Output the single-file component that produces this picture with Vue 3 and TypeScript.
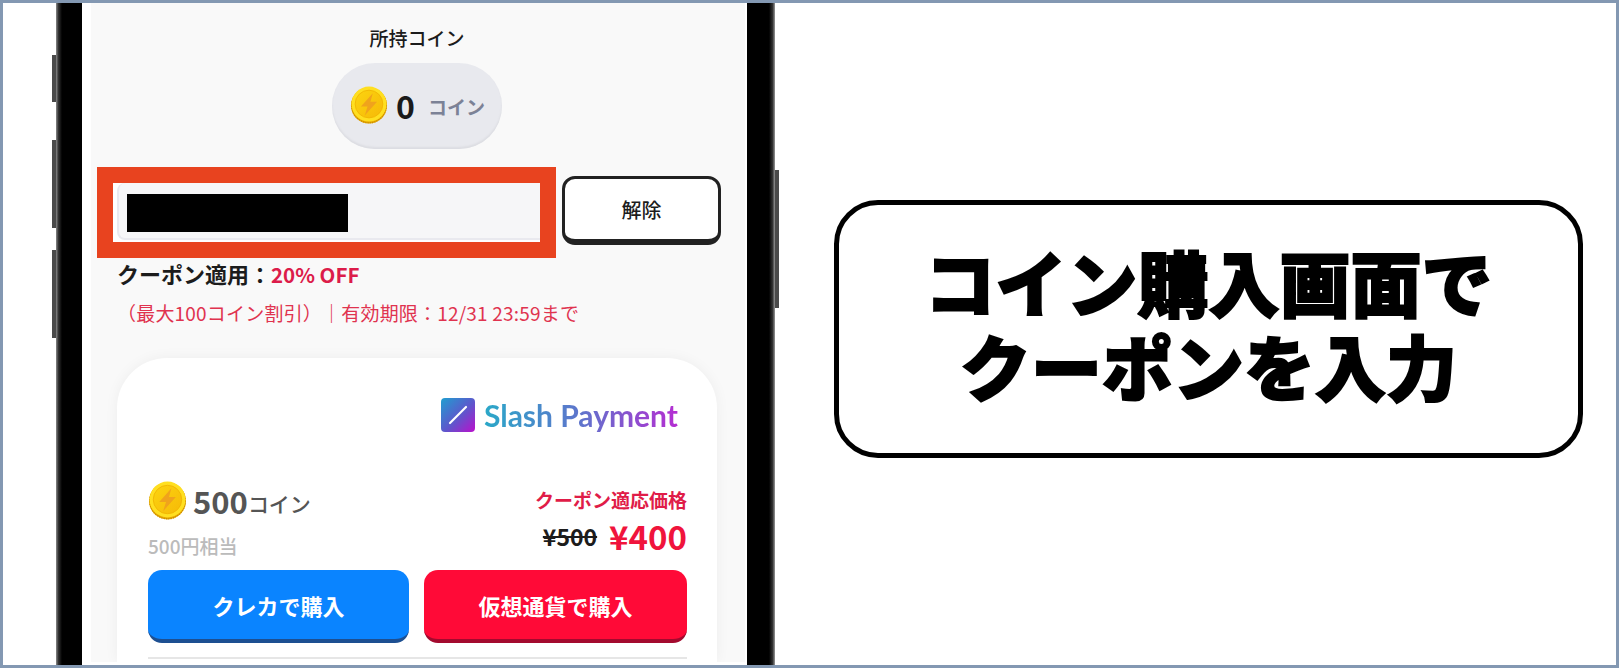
<script setup lang="ts">
const buyButtons = [
  { label: 'クレカで購入', kind: 'credit' },
  { label: '仮想通貨で購入', kind: 'crypto' },
];
</script>

<template>
  <div class="page">
    <svg class="sprite" width="0" height="0" aria-hidden="true">
      <defs>
        <linearGradient id="coinFace" x1="0" y1="0" x2="1" y2="1">
          <stop offset="0" stop-color="#fcd40f" />
          <stop offset="1" stop-color="#f6b908" />
        </linearGradient>
        <linearGradient id="slashGrad" x1="0" y1="0" x2="1" y2="1">
          <stop offset="0" stop-color="#1f9fd0" />
          <stop offset="0.55" stop-color="#5f55cc" />
          <stop offset="1" stop-color="#bb10cc" />
        </linearGradient>
        <symbol id="coin" viewBox="0 0 40 40">
          <circle cx="20" cy="20.5" r="19" fill="#e9a800" />
          <circle cx="20" cy="20.5" r="18.2" fill="none" stroke="#c98f00" stroke-width="1.4" stroke-dasharray="1.2 1.2" />
          <circle cx="20" cy="19" r="18.4" fill="#ffdf20" />
          <circle cx="20" cy="19" r="14.6" fill="url(#coinFace)" stroke="#efb000" stroke-width="0.8" />
          <path d="M24 7.5 L11.5 21.5 H18.5 L15.5 31 L28.5 16.5 H21.5 Z" fill="#f0a31c" />
        </symbol>
      </defs>
    </svg>

    <div class="phone">
      <span class="side-btn left one"></span>
      <span class="side-btn left two"></span>
      <span class="side-btn left three"></span>
      <span class="side-btn right"></span>

      <div class="screen">
        <div class="balance-title">所持コイン</div>
        <div class="balance-pill">
          <svg class="coin-small"><use href="#coin" /></svg>
          <span class="balance-num">0</span>
          <span class="balance-unit">コイン</span>
        </div>

        <div class="coupon-row">
          <div class="highlight">
            <div class="code-input"><div class="redacted"></div></div>
          </div>
          <button class="remove-btn">解除</button>
        </div>

        <div class="applied">クーポン適用：<span class="off">20% OFF</span></div>
        <div class="limit">（最大100コイン割引）｜有効期限：12/31 23:59まで</div>

        <div class="card">
          <div class="logo">
            <svg class="logo-mark" viewBox="0 0 34 34">
              <rect width="34" height="34" rx="4" fill="url(#slashGrad)" />
              <path d="M9 25 L25 9" stroke="#fff" stroke-width="2.2" stroke-linecap="round" />
            </svg>
            <span class="logo-text">Slash Payment</span>
          </div>

          <div class="plan">
            <div>
              <div class="plan-coins">
                <svg class="coin-large"><use href="#coin" /></svg>
                <span class="plan-num">500</span><span class="plan-unit">コイン</span>
              </div>
              <div class="plan-yen">500円相当</div>
            </div>
            <div class="plan-price">
              <div class="price-label">クーポン適応価格</div>
              <div class="price-row">
                <s class="price-old">¥500</s>
                <span class="price-new">¥400</span>
              </div>
            </div>
          </div>

          <div class="buy-row">
            <button v-for="b in buyButtons" :key="b.kind" class="buy-btn" :class="b.kind">{{ b.label }}</button>
          </div>
          <div class="divider"></div>
        </div>
      </div>
    </div>

    <div class="callout">
      <div>コイン購入画面で</div>
      <div>クーポンを入力</div>
    </div>
  </div>
</template>

<style scoped>
.page {
  width: 1619px;
  height: 668px;
  box-sizing: border-box;
  border: 3px solid #8398b2;
  background: #fff;
  display: flex;
  overflow: hidden;
  font-family: "Noto Sans CJK JP", "Noto Sans", sans-serif;
  color: #1c1c1c;
}

.sprite {
  position: absolute;
}

.phone {
  position: relative;
  flex: none;
  width: 719px;
  height: 100%;
  box-sizing: border-box;
  margin-left: 53px;
  border-left: 26px solid #000;
  border-right: 28px solid #000;
  padding: 0 2px 3px 9px;
  background: #fff;
}

.phone::before,
.phone::after {
  content: "";
  position: absolute;
  top: 0;
  bottom: 0;
  width: 6px;
}
.phone::before {
  left: -26px;
  background: linear-gradient(to right, #8a8a8a, #333 40%, #000);
}
.phone::after {
  right: -28px;
  background: linear-gradient(to left, #999, #333 40%, #000);
}

.side-btn {
  position: absolute;
  width: 4px;
  background: #4a4a4a;
}
.side-btn.left {
  left: -30px;
}
.side-btn.one {
  top: 52px;
  height: 47px;
}
.side-btn.two {
  top: 137px;
  height: 88px;
}
.side-btn.three {
  top: 247px;
  height: 88px;
}
.side-btn.right {
  right: -32px;
  top: 167px;
  height: 138px;
}

.screen {
  height: 100%;
  background: #f9f9f9;
  display: flex;
  flex-direction: column;
  overflow: hidden;
  padding-top: 24px;
  box-sizing: border-box;
}

.balance-title {
  flex: none;
  text-align: center;
  font-size: 19px;
  line-height: 22px;
  font-weight: 500;
  margin-right: 2px;
}

.balance-pill {
  flex: none;
  align-self: center;
  margin: 14px 2px 0 0;
  width: 170px;
  height: 86px;
  box-sizing: border-box;
  padding: 0 0 3px 18px;
  border-radius: 43px;
  background: #e8e9ee;
  box-shadow: inset 0 -2px 2px #dcdde2;
  display: flex;
  align-items: center;
}

.coin-small {
  width: 38px;
  height: 38px;
}

.balance-num {
  margin-left: 8px;
  font-size: 32px;
  font-weight: 700;
  color: #1a1a1a;
}

.balance-unit {
  margin: 3px 0 0 13px;
  font-size: 19px;
  font-weight: 700;
  color: #7c8296;
}

.coupon-row {
  flex: none;
  display: flex;
  margin: 18px 0 0 6px;
}

.highlight {
  width: 459px;
  height: 91px;
  box-sizing: border-box;
  border: 16px solid #e8431f;
  background: #fff;
}

.code-input {
  margin-left: 4px;
  height: 57px;
  box-sizing: border-box;
  padding: 11px 0 0 10px;
  background: #f6f6f8;
  border-left: 2px solid #e9e9ef;
  border-bottom: 2px solid #e9e9ef;
  border-radius: 8px 0 0 8px;
}

.redacted {
  width: 221px;
  height: 38px;
  background: #000;
  margin-left: -2px;
}

.remove-btn {
  margin: 9px 0 0 6px;
  width: 159px;
  height: 69px;
  box-sizing: border-box;
  border: 3px solid #222;
  border-bottom-width: 6px;
  border-radius: 13px;
  background: #fff;
  font-family: inherit;
  font-size: 20px;
  font-weight: 500;
  color: #1c1c1c;
}

.applied {
  flex: none;
  margin: 2px 0 0 26px;
  font-size: 22px;
  line-height: 26px;
  font-weight: 700;
}

.off {
  font-size: 20.5px;
  color: #dc1c4a;
}

.limit {
  flex: none;
  margin: 14px 0 0 26px;
  font-size: 19px;
  line-height: 24px;
  letter-spacing: 0.2px;
  color: #e0334f;
  white-space: nowrap;
}

.card {
  flex: 1 0 auto;
  margin: 33px 28px 0 26px;
  padding: 40px 30px 0 31px;
  background: #fff;
  border-radius: 50px 50px 0 0;
  box-shadow: 0 0 14px rgba(0, 0, 0, 0.05);
}

.logo {
  display: flex;
  justify-content: flex-end;
  align-items: center;
  margin-right: 9px;
  height: 34px;
}

.logo-mark {
  width: 34px;
  height: 34px;
}

.logo-text {
  margin-left: 9px;
  font-family: Lato, sans-serif;
  font-size: 30px;
  font-weight: 700;
  background: linear-gradient(to right, #2aa8c8, #5f74cc 50%, #b52ed2);
  -webkit-background-clip: text;
  background-clip: text;
  color: transparent;
}

.plan {
  display: flex;
  justify-content: space-between;
  margin-top: 48px;
  height: 78px;
}

.plan-coins {
  display: flex;
  align-items: center;
  height: 41px;
  color: #555;
}

.coin-large {
  width: 39px;
  height: 41px;
}

.plan-num {
  margin-left: 6px;
  font-size: 31px;
  font-weight: 700;
}

.plan-unit {
  font-size: 21px;
  font-weight: 500;
  margin-top: 5px;
}

.plan-yen {
  margin-top: 13px;
  font-size: 19px;
  line-height: 24px;
  font-weight: 500;
  color: #bbb;
}

.plan-price {
  padding-top: 8px;
  text-align: right;
}

.price-label {
  font-size: 19px;
  line-height: 24px;
  font-weight: 700;
  color: #e01c48;
}

.price-row {
  margin-top: 6px;
  height: 36px;
  display: flex;
  justify-content: flex-end;
  align-items: center;
}

.price-old {
  font-size: 23px;
  font-weight: 700;
  color: #1c1c1c;
}

.price-new {
  margin-left: 12px;
  font-size: 33px;
  font-weight: 700;
  color: #f0143c;
}

.buy-row {
  display: grid;
  grid-template-columns: 261px 1fr;
  gap: 15px;
  margin-top: 12px;
}

.buy-btn {
  height: 73px;
  border: 0;
  border-bottom: 4px solid;
  border-radius: 14px;
  font-family: inherit;
  font-size: 22px;
  font-weight: 700;
  color: #fff;
}

.buy-btn.credit {
  background: #0a84ff;
  border-color: #1d4f91;
}

.buy-btn.crypto {
  background: #ff0a37;
  border-color: #a30a2e;
}

.divider {
  margin-top: 14px;
  height: 2px;
  background: #e6e6e6;
}

.callout {
  flex: none;
  width: 749px;
  height: 258px;
  box-sizing: border-box;
  margin: 197px 0 0 59px;
  border: 5px solid #000;
  border-radius: 44px;
  display: flex;
  flex-direction: column;
  align-items: center;
  justify-content: center;
  font-size: 71px;
  line-height: 84px;
  font-weight: 900;
  color: #000;
  -webkit-text-stroke: 2px #000;
  padding-bottom: 14px;
}
</style>
